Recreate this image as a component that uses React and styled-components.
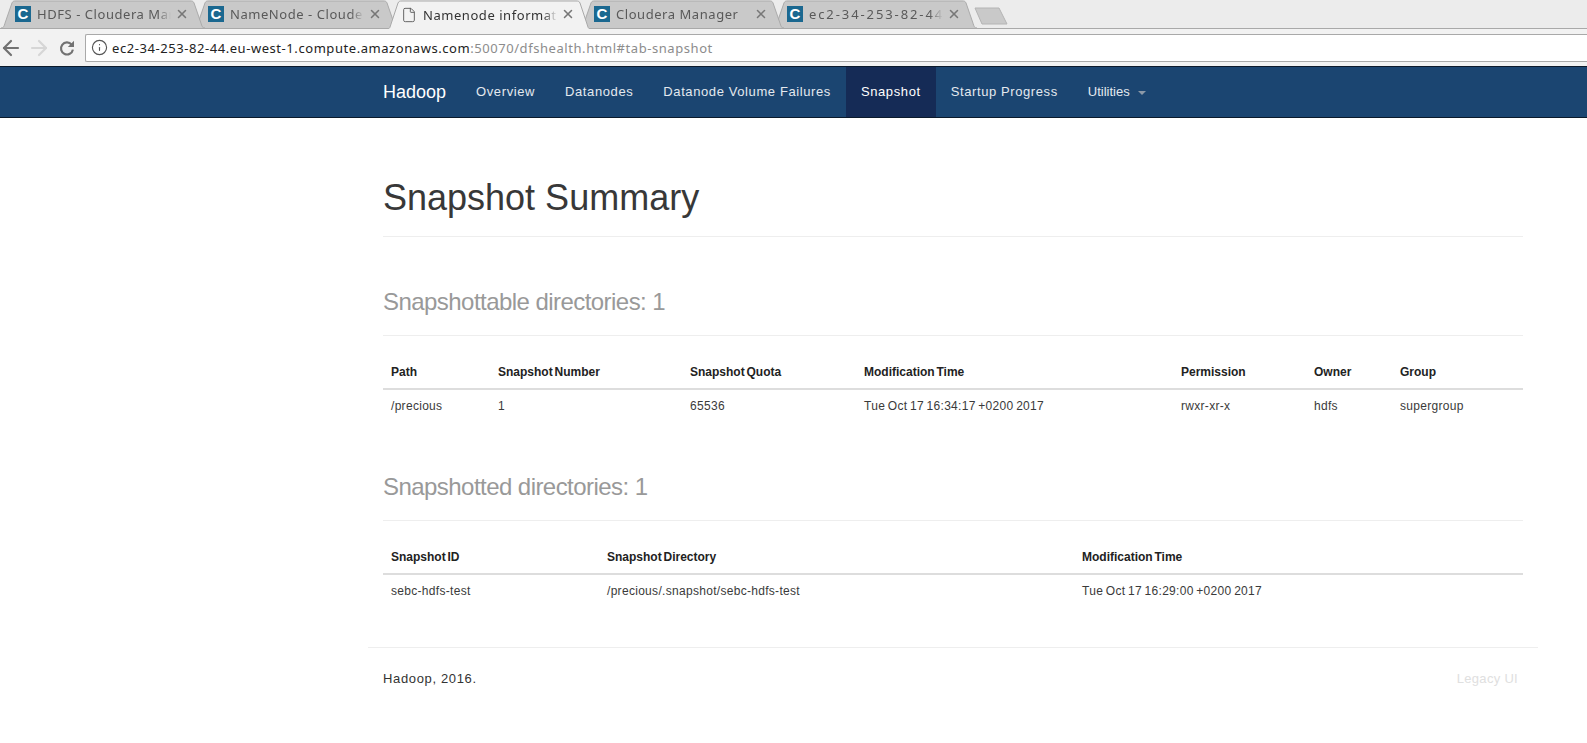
import React from 'react';
import styled, { createGlobalStyle } from 'styled-components';
import { ArrowLeft, ArrowRight, Info, File, X } from 'lucide-react';

const GlobalStyle = createGlobalStyle`
  html, body {
    margin: 0;
    padding: 0;
    background: #fff;
    overflow: hidden;
  }
  body {
    font-family: "Liberation Sans", Arial, sans-serif;
    font-size: 14px;
    color: #333;
  }
`;

const Page = styled.div`
  width: 1587px;
  height: 743px;
  overflow: hidden;
`;

const TabStrip = styled.div`
  height: 29px;
  box-sizing: border-box;
  background: #ececec;
  border-bottom: 1px solid #a9a9a9;
  display: flex;
  align-items: flex-start;
  padding-left: 1px;
`;

const TabItem = styled.div`
  position: relative;
  flex: none;
  width: 204px;
  height: ${({ $active }) => ($active ? '29px' : '28px')};
  margin-right: -11px;
  z-index: ${({ $order }) => $order};
  display: flex;
  align-items: center;
  padding-left: 14px;
  box-sizing: border-box;
`;

const TabShape = styled.svg`
  position: absolute;
  left: 0;
  top: 0;
  width: 100%;
  height: 100%;
`;

const Favicon = styled.div`
  position: relative;
  flex: none;
  width: 16px;
  height: 16px;
  background: #1b6890;
  color: #fff;
  font: bold 15px/16px "Liberation Sans", sans-serif;
  text-align: center;
`;

const DocIcon = styled(File)`
  position: relative;
  flex: none;
  width: 16px;
  height: 16px;
  color: #5a5a5a;
`;

const TabTitle = styled.div`
  position: relative;
  width: 134px;
  margin-left: 6px;
  white-space: nowrap;
  overflow: hidden;
  font-family: "Noto Sans", sans-serif;
  font-size: 13px;
  letter-spacing: ${({ $wide }) => ($wide ? '1.9px' : '0.55px')};
  color: ${({ $active }) => ($active ? '#333' : '#595959')};
  -webkit-mask-image: linear-gradient(to right, #000 90%, transparent 100%);
  mask-image: linear-gradient(to right, #000 90%, transparent 100%);
`;

const TabClose = styled(X)`
  position: absolute;
  left: 174px;
  top: 7px;
  width: 14px;
  height: 14px;
  color: #777;
  stroke-width: 2.6;
`;

const NewTab = styled.svg`
  flex: none;
  width: 34px;
  height: 18px;
  margin: 7px 0 0 8px;
`;

const Toolbar = styled.div`
  height: 37px;
  box-sizing: border-box;
  background: #f2f2f2;
  display: flex;
  align-items: center;
  padding: 0;
`;

const NavButton = styled.div`
  flex: none;
  width: 28px;
  display: flex;
  color: ${({ $disabled }) => ($disabled ? '#d6d6d6' : '#727272')};

  &:first-child {
    margin-left: -1px;
  }

  svg {
    width: 24px;
    height: 24px;
    stroke-width: 2.2;
  }
`;

const Omnibox = styled.div`
  flex: 1;
  height: 28px;
  margin-left: 2px;
  box-sizing: border-box;
  background: #fff;
  border: 1px solid #a9a9a9;
  border-right: none;
  border-radius: 2px 0 0 2px;
  display: flex;
  align-items: center;
  padding-left: 5px;
  font-family: "Noto Sans", sans-serif;
  font-size: 13px;
  letter-spacing: 0.56px;
  color: #222;

  svg {
    flex: none;
    width: 17px;
    height: 17px;
    stroke-width: 1.6;
    color: #555;
    margin-right: 4px;
  }
`;

const UrlMuted = styled.span`
  color: #8c8c8c;
`;

const NavBar = styled.nav`
  height: 52px;
  box-sizing: border-box;
  background: #1b4571;
  border-top: 1px solid #0b1a2b;
  border-bottom: 1px solid #0b1a2b;
`;

const NavInner = styled.div`
  margin-left: 383px;
  display: flex;
  height: 50px;
`;

const Brand = styled.a`
  font-size: 18px;
  line-height: 50px;
  color: #fff;
  margin-right: 15px;
`;

const NavLink = styled.a`
  display: flex;
  align-items: center;
  padding: 0 15px 1px;
  font-size: 13px;
  letter-spacing: ${({ $tight }) => ($tight ? '0' : '0.6px')};
  color: ${({ $active }) => ($active ? '#fff' : '#e4e9ef')};
  background: ${({ $active }) => ($active ? '#152b56' : 'transparent')};
`;

const Caret = styled.span`
  width: 0;
  height: 0;
  margin-left: 8px;
  margin-top: 2px;
  border-top: 4px solid #8c99a8;
  border-left: 4px solid transparent;
  border-right: 4px solid transparent;
`;

const Container = styled.div`
  width: 1170px;
  margin-left: 368px;
  box-sizing: border-box;
`;

const Content = styled.div`
  padding: 0 15px;
`;

const PageHeader = styled.div`
  margin-top: ${({ $top }) => $top}px;
  padding-bottom: 9px;
  border-bottom: 1px solid #eee;
`;

const Title = styled.h1`
  margin: 0 0 9px;
  font-size: 36px;
  font-weight: 500;
  line-height: 40px;
  color: #383838;
`;

const SubTitle = styled.h3`
  margin: 0 0 11px;
  font-size: 24px;
  font-weight: 400;
  line-height: 26px;
  letter-spacing: -0.55px;
  color: #999;
`;

const Table = styled.table`
  width: 100%;
  margin-top: 20px;
  border-collapse: collapse;
  table-layout: fixed;
  font-size: 12px;
`;

const HeadCell = styled.th`
  box-sizing: border-box;
  width: ${({ $w }) => ($w ? `${$w}px` : 'auto')};
  padding: 8px 8px 7px;
  height: 32px;
  line-height: 17px;
  text-align: left;
  font-weight: bold;
  word-spacing: -1.5px;
  color: #222;
  border-bottom: 2px solid #ddd;
`;

const BodyCell = styled.td`
  padding: 8px;
  line-height: 17px;
  letter-spacing: 0.3px;
  word-spacing: -1px;
  color: #3a3a3a;
`;

const Footer = styled.footer`
  margin-top: 39px;
  border-top: 1px solid #eee;
  display: flex;
  justify-content: space-between;
  padding: 21px 20px 0 15px;
  font-size: 13px;
  line-height: 20px;
  letter-spacing: 0.65px;
`;

const LegacyLink = styled.a`
  color: #e0e0e0;
  letter-spacing: 0.3px;
`;

const tabs = [
  { title: 'HDFS - Cloudera Manager' },
  { title: 'NameNode - Cloudera Manager' },
  { title: 'Namenode information', active: true },
  { title: 'Cloudera Manager' },
  { title: 'ec2-34-253-82-44.eu-west-1', wide: true },
];

const Tab = ({ title, active, wide, order }) => (
  <TabItem $active={active} $order={active ? 9 : order}>
    <TabShape viewBox="0 0 204 29" preserveAspectRatio="none">
      <path
        d="M0 29 C3 29 3 27 4 24 L11 3 C12 1 13 1 15 1 L189 1 C191 1 192 1 193 3 L200 24 C201 27 201 29 204 29"
        fill={active ? '#f2f2f2' : '#c9c9c9'}
        stroke="#a9a9a9"
      />
    </TabShape>
    {active ? <DocIcon strokeWidth={1.4} /> : <Favicon>C</Favicon>}
    <TabTitle $active={active} $wide={wide}>{title}</TabTitle>
    <TabClose />
  </TabItem>
);

const ReloadIcon = () => (
  <svg viewBox="0 0 24 24" fill="none">
    <path d="M16.6 8.6 A6 6 0 1 0 17.9 13.6" stroke="currentColor" strokeWidth="2.2" />
    <path d="M19 4.8 L19 11 L12.8 11 Z" fill="currentColor" />
  </svg>
);

const snapshottable = {
  heads: [['Path', 107], ['Snapshot Number', 192], ['Snapshot Quota', 174], ['Modification Time', 317], ['Permission', 133], ['Owner', 86], ['Group']],
  row: ['/precious', '1', '65536', 'Tue Oct 17 16:34:17 +0200 2017', 'rwxr-xr-x', 'hdfs', 'supergroup'],
};

const snapshotted = {
  heads: [['Snapshot ID', 216], ['Snapshot Directory', 475], ['Modification Time']],
  row: ['sebc-hdfs-test', '/precious/.snapshot/sebc-hdfs-test', 'Tue Oct 17 16:29:00 +0200 2017'],
};

const DataTable = ({ heads, row }) => (
  <Table>
    <thead>
      <tr>
        {heads.map(([label, w]) => <HeadCell key={label} $w={w}>{label}</HeadCell>)}
      </tr>
    </thead>
    <tbody>
      <tr>
        {row.map((cell) => <BodyCell key={cell}>{cell}</BodyCell>)}
      </tr>
    </tbody>
  </Table>
);

const App = () => (
  <Page>
    <GlobalStyle />
    <TabStrip>
      {tabs.map((tab, i) => <Tab key={tab.title} order={tabs.length - i} {...tab} />)}
      <NewTab viewBox="0 0 34 18">
        <path d="M1 1 L25 1 L33 17 L8 17 Z" fill="#c9c9c9" stroke="#b4b4b4" strokeLinejoin="round" />
      </NewTab>
    </TabStrip>
    <Toolbar>
      <NavButton><ArrowLeft /></NavButton>
      <NavButton $disabled><ArrowRight /></NavButton>
      <NavButton><ReloadIcon /></NavButton>
      <Omnibox>
        <Info />
        <span>ec2-34-253-82-44.eu-west-1.compute.amazonaws.com<UrlMuted>:50070/dfshealth.html#tab-snapshot</UrlMuted></span>
      </Omnibox>
    </Toolbar>
    <NavBar>
      <NavInner>
        <Brand>Hadoop</Brand>
        <NavLink>Overview</NavLink>
        <NavLink>Datanodes</NavLink>
        <NavLink>Datanode Volume Failures</NavLink>
        <NavLink $active>Snapshot</NavLink>
        <NavLink>Startup Progress</NavLink>
        <NavLink $tight>Utilities<Caret /></NavLink>
      </NavInner>
    </NavBar>
    <Container>
      <Content>
        <PageHeader $top={60}>
          <Title>Snapshot Summary</Title>
        </PageHeader>
        <PageHeader $top={52}>
          <SubTitle>Snapshottable directories: 1</SubTitle>
        </PageHeader>
        <DataTable {...snapshottable} />
        <PageHeader $top={51}>
          <SubTitle>Snapshotted directories: 1</SubTitle>
        </PageHeader>
        <DataTable {...snapshotted} />
      </Content>
      <Footer>
        <span>Hadoop, 2016.</span>
        <LegacyLink>Legacy UI</LegacyLink>
      </Footer>
    </Container>
  </Page>
);

export default App;
